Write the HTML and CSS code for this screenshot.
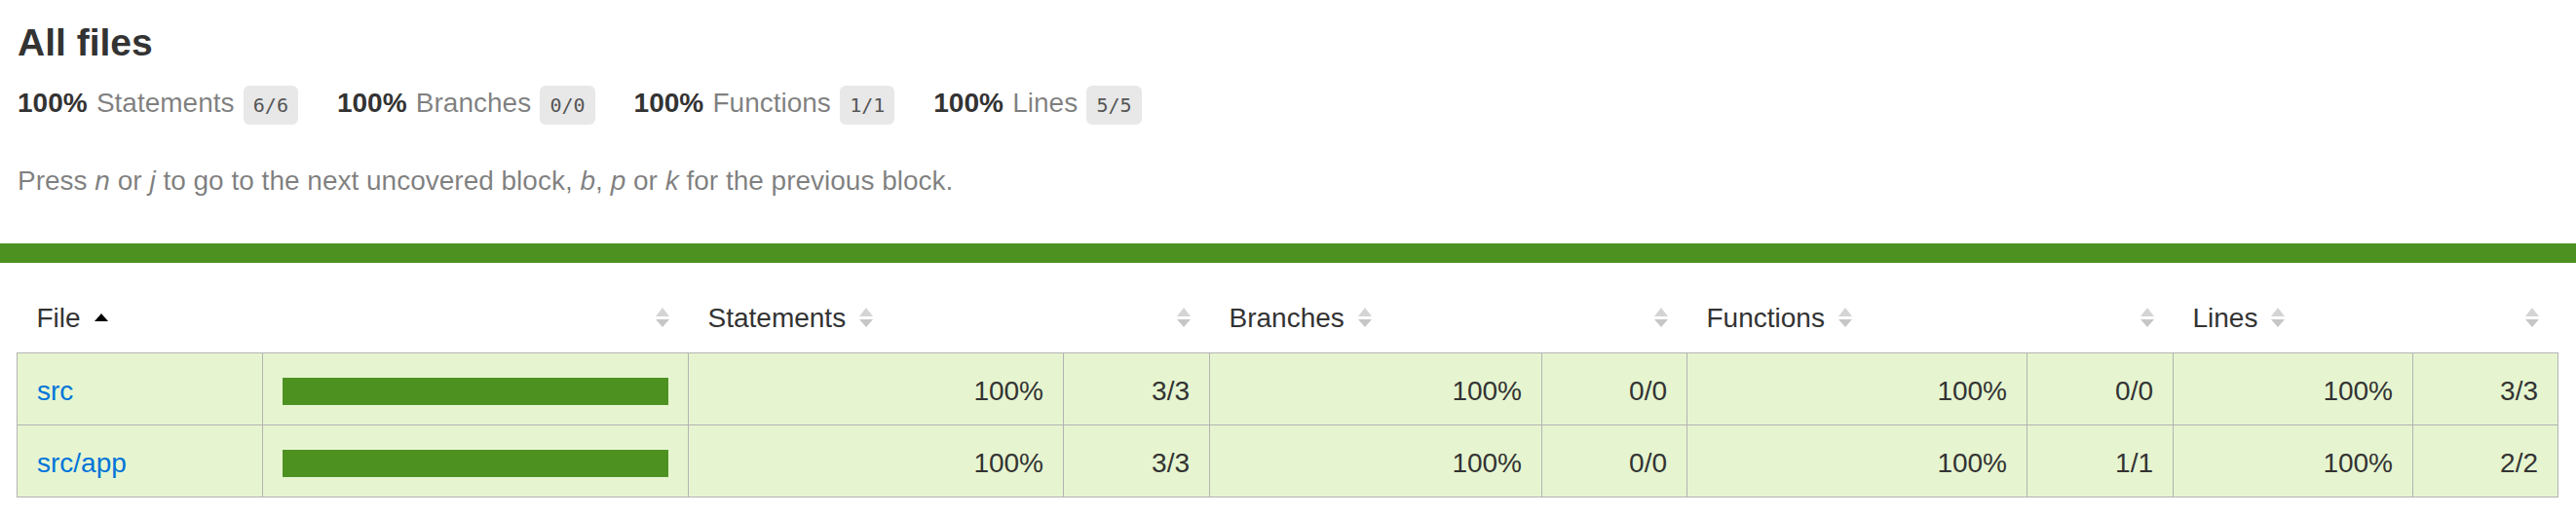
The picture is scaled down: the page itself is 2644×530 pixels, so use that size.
FILE: index.html
```html
<!doctype html>
<html lang="en">
<head>
<meta charset="utf-8">
<title>Code coverage report for All files</title>
<link rel="stylesheet" href="styles.css">
</head>
<body>
<div class="wrapper">
  <div class="pad-top">
    <h1>All files</h1>
    <div class="clearfix">
      <div class="stat">
        <span class="strong">100% </span>
        <span class="quiet">Statements</span>
        <span class="fraction">6/6</span>
      </div>
      <div class="stat">
        <span class="strong">100% </span>
        <span class="quiet">Branches</span>
        <span class="fraction">0/0</span>
      </div>
      <div class="stat">
        <span class="strong">100% </span>
        <span class="quiet">Functions</span>
        <span class="fraction">1/1</span>
      </div>
      <div class="stat">
        <span class="strong">100% </span>
        <span class="quiet">Lines</span>
        <span class="fraction">5/5</span>
      </div>
    </div>
    <p class="quiet help">
      Press <em>n</em> or <em>j</em> to go to the next uncovered block, <em>b</em>, <em>p</em> or <em>k</em> for the previous block.
    </p>
  </div>
  <div class="status-line high"></div>
  <div class="pad-table">
    <table class="coverage-summary">
      <colgroup>
        <col class="w-file"><col class="w-pic">
        <col class="w-spct"><col class="w-abs">
        <col class="w-bpct"><col class="w-abs2">
        <col class="w-fpct"><col class="w-abs">
        <col class="w-lpct"><col class="w-abs2">
      </colgroup>
      <thead>
        <tr>
          <th class="file sorted">File<span class="sorter"></span></th>
          <th class="pic"><span class="sorter"></span></th>
          <th class="pct">Statements<span class="sorter"></span></th>
          <th class="abs"><span class="sorter"></span></th>
          <th class="pct">Branches<span class="sorter"></span></th>
          <th class="abs"><span class="sorter"></span></th>
          <th class="pct">Functions<span class="sorter"></span></th>
          <th class="abs"><span class="sorter"></span></th>
          <th class="pct">Lines<span class="sorter"></span></th>
          <th class="abs"><span class="sorter"></span></th>
        </tr>
      </thead>
      <tbody>
        <tr>
          <td class="file high"><a href="#src">src</a></td>
          <td class="pic high"><div class="chart"><div class="cover-fill cover-full"></div></div></td>
          <td class="pct high">100%</td>
          <td class="abs high">3/3</td>
          <td class="pct high">100%</td>
          <td class="abs high">0/0</td>
          <td class="pct high">100%</td>
          <td class="abs high">0/0</td>
          <td class="pct high">100%</td>
          <td class="abs high">3/3</td>
        </tr>
        <tr>
          <td class="file high"><a href="#src-app">src/app</a></td>
          <td class="pic high"><div class="chart"><div class="cover-fill cover-full"></div></div></td>
          <td class="pct high">100%</td>
          <td class="abs high">3/3</td>
          <td class="pct high">100%</td>
          <td class="abs high">0/0</td>
          <td class="pct high">100%</td>
          <td class="abs high">1/1</td>
          <td class="pct high">100%</td>
          <td class="abs high">2/2</td>
        </tr>
      </tbody>
    </table>
  </div>
</div>
</body>
</html>
```

FILE: styles.css
```css
*, *::before, *::after { box-sizing: border-box; }

html, body {
  margin: 0;
  padding: 0;
  background: #fff;
}

body {
  font-family: "Liberation Sans", Arial, Helvetica, sans-serif;
  font-size: 28px;
  color: #333;
}

a {
  color: #0074D9;
  text-decoration: none;
}

.pad-top {
  padding: 20px 18px 20px 18px;
}

h1 {
  font-size: 39px;
  line-height: 48px;
  font-weight: bold;
  margin: 0;
}

.clearfix::after {
  content: '';
  display: block;
  height: 0;
  clear: both;
}

.stat {
  float: left;
  padding: 20px 40px 20px 0;
  line-height: 35px;
  word-spacing: 1.5px;
}

.strong { font-weight: bold; }

.quiet { color: rgba(0, 0, 0, 0.5); }

.fraction {
  font-family: "DejaVu Sans Mono", "Liberation Mono", monospace;
  font-size: 20px;
  line-height: 20px;
  color: #555;
  background: #E8E8E8;
  padding: 8px 10px;
  border-radius: 6px;
  vertical-align: middle;
  word-spacing: 0;
}

.help {
  margin: 27px 0 28px;
  line-height: 32px;
}

.status-line {
  height: 20px;
}

.status-line.high {
  background: rgb(77, 146, 33);
}

.pad-table {
  padding: 20px 18px 20px 17px;
}

.coverage-summary {
  border-collapse: collapse;
  width: 100%;
  table-layout: fixed;
}

.w-file { width: 252px; }
.w-pic { width: 437px; }
.w-spct { width: 385px; }
.w-abs { width: 150px; }
.w-abs2 { width: 149px; }
.w-bpct { width: 341px; }
.w-fpct { width: 349px; }
.w-lpct { width: 246px; }

.coverage-summary tr {
  border-bottom: 1px solid #b3b3b3;
}

.coverage-summary tbody {
  border: 1px solid #b3b3b3;
}

.coverage-summary th {
  text-align: left;
  font-weight: normal;
  white-space: nowrap;
  padding: 20px 20px 19px;
  line-height: 33px;
  color: #333;
}

.coverage-summary th.pic,
.coverage-summary th.abs,
.coverage-summary td.pct,
.coverage-summary td.abs {
  text-align: right;
}

.coverage-summary td {
  padding: 22px 20px 18px;
  line-height: 33px;
  border-right: 1px solid #b3b3b3;
  white-space: nowrap;
}

.coverage-summary td:last-child {
  border-right: none;
}

.high {
  background: rgb(230, 245, 208);
}

.chart {
  line-height: 0;
  border: 2px solid rgb(77, 146, 33);
}

.cover-fill {
  display: block;
  height: 24px;
  width: 100%;
  background: rgb(77, 146, 33);
}

.sorter {
  display: inline-block;
  position: relative;
  width: 14px;
  height: 20px;
  margin-left: 14px;
}

.sorter::before {
  content: '';
  position: absolute;
  left: 0;
  top: 0;
  border-left: 7px solid transparent;
  border-right: 7px solid transparent;
  border-bottom: 9px solid #d4d4d4;
}

.sorter::after {
  content: '';
  position: absolute;
  left: 0;
  top: 12px;
  border-left: 7px solid transparent;
  border-right: 7px solid transparent;
  border-top: 8px solid #c6c6c6;
}

.sorted .sorter::before {
  top: 6px;
  border-bottom: 8px solid #000;
}

.sorted .sorter::after {
  display: none;
}
```
